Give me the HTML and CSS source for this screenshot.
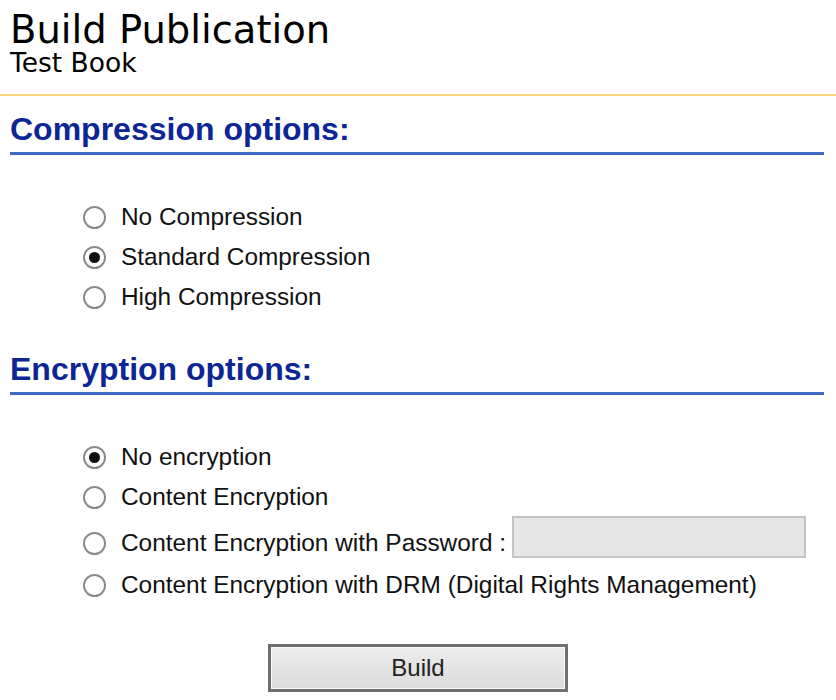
FILE: index.html
```html
<!DOCTYPE html>
<html lang="en">
  <head>
    <meta charset="UTF-8" />
    <title>Build Publication</title>
    <link rel="stylesheet" href="styles.css">
  </head>
  <body>
    <div class="page-header">
      <h1 class="page-title">Build Publication</h1>
      <div class="page-subtitle">Test Book</div>
    </div>

    <div class="section">
      <h2 class="section-title">Compression options:</h2>
      <div class="options">
        <label class="option">
          <input type="radio" name="compression" />
          No Compression
        </label>
        <label class="option">
          <input type="radio" name="compression" checked />
          Standard Compression
        </label>
        <label class="option">
          <input type="radio" name="compression" />
          High Compression
        </label>
      </div>
    </div>

    <div class="section">
      <h2 class="section-title">Encryption options:</h2>
      <div class="options">
        <label class="option">
          <input type="radio" name="encryption" checked />
          No encryption
        </label>
        <label class="option">
          <input type="radio" name="encryption" />
          Content Encryption
        </label>
        <label class="option option-password">
          <input type="radio" name="encryption" />
          Content Encryption with Password :
          <input type="password" class="password-input" disabled />
        </label>
        <label class="option">
          <input type="radio" name="encryption" />
          Content Encryption with DRM (Digital Rights Management)
        </label>
      </div>
    </div>

    <div class="actions">
      <button class="build-btn">Build</button>
    </div>
  </body>
</html>
```

FILE: styles.css
```css
* {
  margin: 0;
  padding: 0;
  box-sizing: border-box;
}

body {
  background-color: white;
  font-family: "Liberation Sans", Arial, sans-serif;
  color: #111;
}

/* Header */
.page-header {
  padding: 9px 10px 19px;
  border-bottom: 2px solid #ffd580;
  font-family: "DejaVu Sans", Verdana, sans-serif;
  color: #000;
}

.page-title {
  font-size: 38.5px;
  font-weight: normal;
  line-height: 42px;
}

.page-subtitle {
  font-size: 26.5px;
  line-height: 24px;
}

/* Sections */
.section {
  padding: 0 12px 0 10px;
}

.section-title {
  font-size: 32px;
  font-weight: bold;
  color: #0c2696;
  line-height: 36px;
  padding-top: 15px;
  padding-bottom: 5px;
  border-bottom: 3px solid #3b6bc4;
}

.options {
  padding: 42px 0 19px 73px;
}

.option {
  display: flex;
  align-items: center;
  height: 40px;
  font-size: 24.4px;
  color: #111;
  white-space: nowrap;
}

.option input[type="radio"] {
  appearance: none;
  width: 23px;
  height: 23px;
  margin-right: 15px;
  border: 2px solid #8a8a8a;
  border-radius: 50%;
  background-color: white;
  display: flex;
  align-items: center;
  justify-content: center;
  flex-shrink: 0;
}

.option input[type="radio"]:checked::after {
  content: "";
  width: 11px;
  height: 11px;
  border-radius: 50%;
  background-color: #111;
}

.option-password {
  height: 48px;
  padding-top: 4px;
}

.password-input {
  width: 294px;
  height: 42px;
  margin-left: 6px;
  margin-bottom: 12px;
  background-color: #e6e6e6;
  border: 2px solid #c4c4c4;
}

/* Build button */
.actions {
  display: flex;
  justify-content: center;
  padding-top: 20px;
}

.build-btn {
  width: 300px;
  height: 48px;
  font-family: "Liberation Sans", Arial, sans-serif;
  font-size: 24px;
  color: #222;
  border: 3px solid #6f6f6f;
  box-shadow: inset 0 0 0 1px #fafafa;
  background: linear-gradient(#ececec, #dcdcdc);
  cursor: pointer;
}
```
